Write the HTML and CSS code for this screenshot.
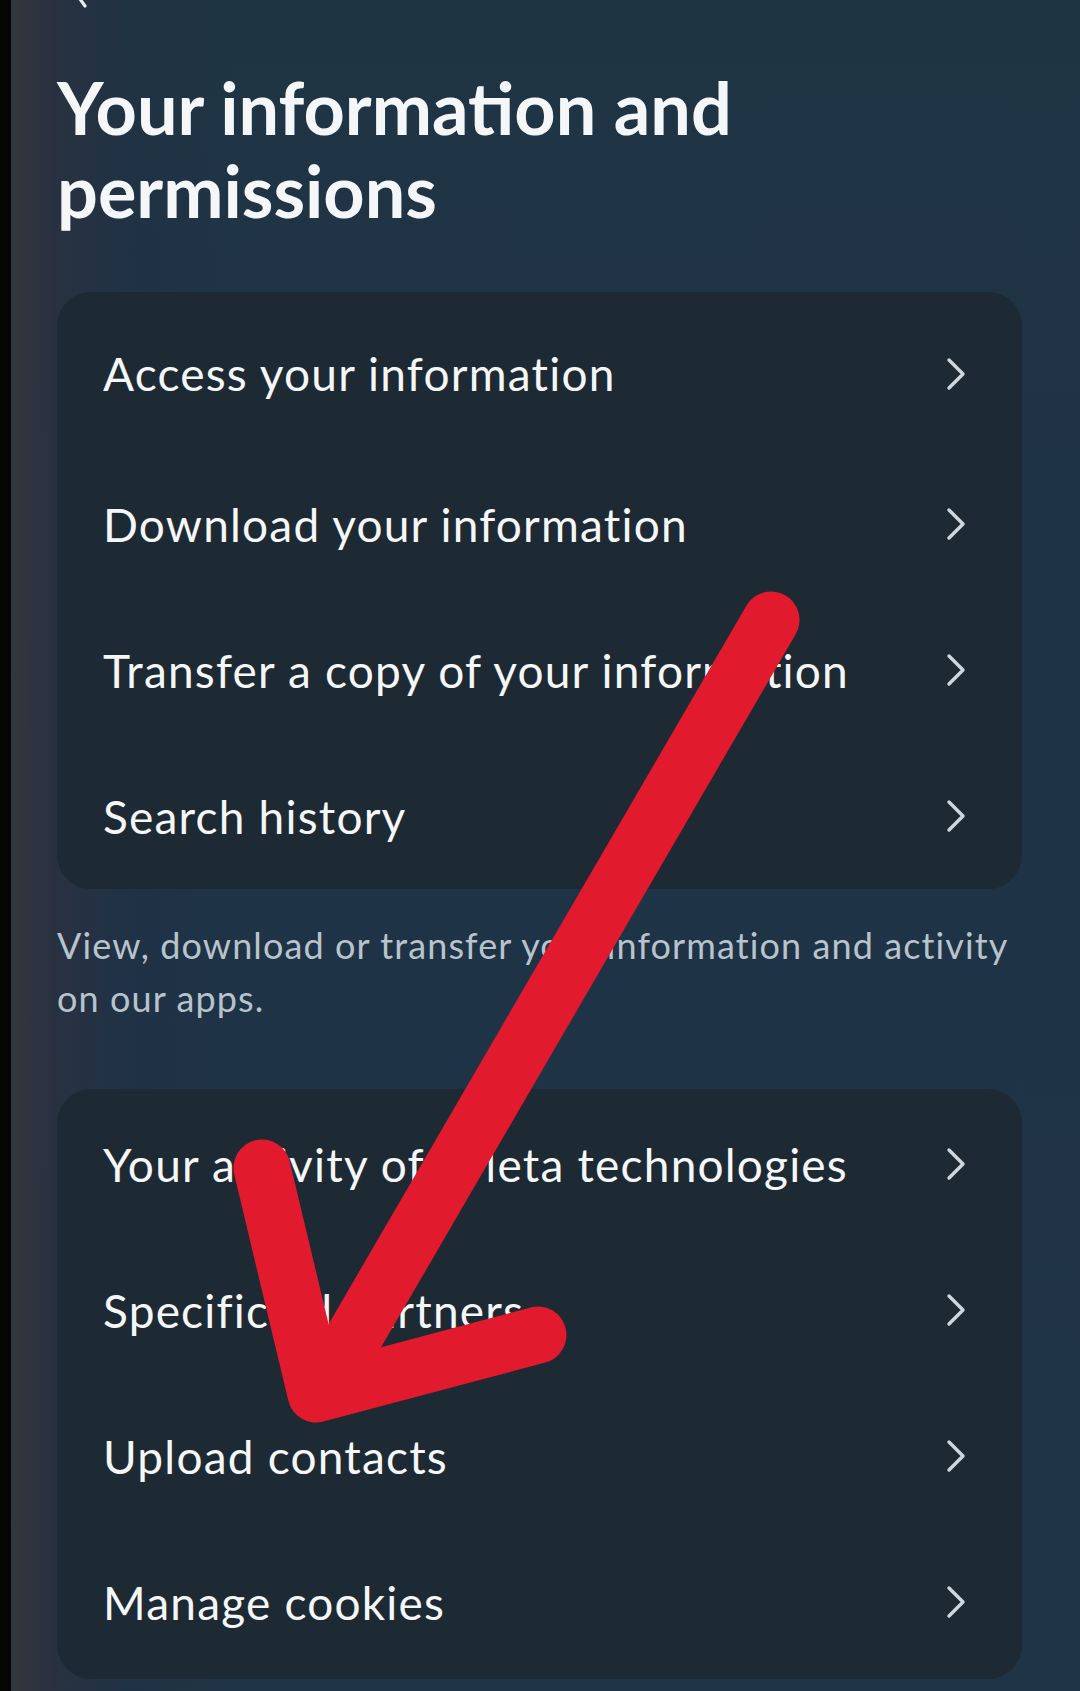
FILE: index.html
```html
<!DOCTYPE html>
<html lang="en">
<head>
<meta charset="utf-8">
<title>Your information and permissions</title>
<link rel="stylesheet" href="styles.css">
</head>
<body>
<div class="page">
  <div class="topbar">
    <svg class="back" width="24" height="8" viewBox="0 0 24 8"><path d="M2 -8 L12 6" fill="none" stroke="#e8ecef" stroke-width="3.2" stroke-linecap="round"/></svg>
  </div>
  <h1 class="title">Your information and permissions</h1>

  <div class="card card-first">
    <div class="row row-lead"><span class="label">Access your information</span><svg class="chev" viewBox="0 0 20 34"><path d="M3 3 L17 17 L3 31" /></svg></div>
    <div class="row"><span class="label">Download your information</span><svg class="chev" viewBox="0 0 20 34"><path d="M3 3 L17 17 L3 31" /></svg></div>
    <div class="row"><span class="label">Transfer a copy of your information</span><svg class="chev" viewBox="0 0 20 34"><path d="M3 3 L17 17 L3 31" /></svg></div>
    <div class="row"><span class="label">Search history</span><svg class="chev" viewBox="0 0 20 34"><path d="M3 3 L17 17 L3 31" /></svg></div>
  </div>

  <p class="desc">View, download or transfer your information and activity on our apps.</p>

  <div class="card card-second">
    <div class="row"><span class="label">Your activity off Meta technologies</span><svg class="chev" viewBox="0 0 20 34"><path d="M3 3 L17 17 L3 31" /></svg></div>
    <div class="row"><span class="label">Specific ad partners</span><svg class="chev" viewBox="0 0 20 34"><path d="M3 3 L17 17 L3 31" /></svg></div>
    <div class="row"><span class="label">Upload contacts</span><svg class="chev" viewBox="0 0 20 34"><path d="M3 3 L17 17 L3 31" /></svg></div>
    <div class="row"><span class="label">Manage cookies</span><svg class="chev" viewBox="0 0 20 34"><path d="M3 3 L17 17 L3 31" /></svg></div>
  </div>

  <svg class="annotation" viewBox="0 0 1080 1691" preserveAspectRatio="none">
    <path d="M771 620 L332 1375" />
    <path d="M262 1168 L316 1394 L538 1335" />
  </svg>
</div>
</body>
</html>
```

FILE: styles.css
```css
* { box-sizing: border-box; }
html, body {
  margin: 0;
  padding: 0;
  background: #050505;
}
body {
  width: 1080px;
  height: 1691px;
  overflow: hidden;
  font-family: "Lato", "Noto Sans", sans-serif;
  color: #f4f6f8;
}
.page {
  position: relative;
  margin-left: 11px;
  height: 1691px;
  padding: 0 58px 0 46px;
  background:
    linear-gradient(90deg, rgba(52,56,60,0.95) 0px, rgba(46,48,62,0.7) 40px, rgba(34,46,66,0.25) 110px, rgba(30,50,70,0) 220px),
    linear-gradient(180deg, #1f3443 0%, #1f3347 40%, #1f3444 100%);
}
.topbar {
  height: 8px;
}
.back {
  display: block;
  margin-left: 16px;
}
.title {
  margin: 58px 0 0 0;
  font-size: 72px;
  line-height: 83px;
  font-weight: 700;
  letter-spacing: 0;
  width: 760px;
}
.card {
  background: #1e2a33;
  border-radius: 34px;
  display: flex;
  flex-direction: column;
}
.card-first {
  margin-top: 60px;
  padding-top: 4px;
}
.card-second {
  margin-top: 64px;
  padding-top: 2px;
  padding-bottom: 4px;
}
.row {
  height: 146px;
  display: flex;
  align-items: center;
  justify-content: space-between;
  padding: 0 56px 0 46px;
}
.row-lead {
  height: 155px;
}
.label {
  font-size: 46px;
  font-weight: 400;
  letter-spacing: 1.2px;
}
.chev {
  width: 20px;
  height: 34px;
  fill: none;
  stroke: #cfd6dc;
  stroke-width: 3.4;
  stroke-linecap: round;
  stroke-linejoin: round;
}
.desc {
  margin: 30px 0 0 0;
  font-size: 36px;
  line-height: 53px;
  letter-spacing: 1.1px;
  color: #b8c3cc;
}
.annotation {
  position: absolute;
  left: -11px;
  top: 0;
  width: 1080px;
  height: 1691px;
  pointer-events: none;
  fill: none;
  stroke: #e21a2d;
  stroke-width: 57;
  stroke-linecap: round;
  stroke-linejoin: round;
}
```
